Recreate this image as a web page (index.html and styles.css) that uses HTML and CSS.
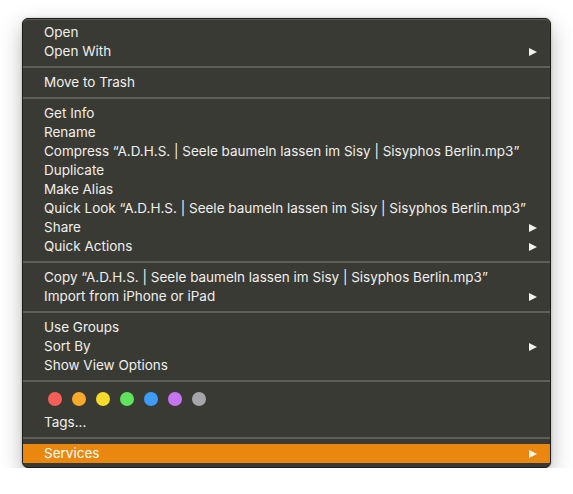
FILE: index.html
```html
<!DOCTYPE html>
<html>
<head>
<meta charset="utf-8">
<link rel="stylesheet" href="styles.css">
</head>
<body>
<div class="menu">
  <div class="item">Open</div>
  <div class="item sub">Open With</div>
  <div class="sep"></div>
  <div class="item">Move to Trash</div>
  <div class="sep"></div>
  <div class="item">Get Info</div>
  <div class="item">Rename</div>
  <div class="item">Compress “A.D.H.S. | Seele baumeln lassen im Sisy | Sisyphos Berlin.mp3”</div>
  <div class="item">Duplicate</div>
  <div class="item">Make Alias</div>
  <div class="item">Quick Look “A.D.H.S. | Seele baumeln lassen im Sisy | Sisyphos Berlin.mp3”</div>
  <div class="item sub">Share</div>
  <div class="item sub">Quick Actions</div>
  <div class="sep"></div>
  <div class="item">Copy “A.D.H.S. | Seele baumeln lassen im Sisy | Sisyphos Berlin.mp3”</div>
  <div class="item sub">Import from iPhone or iPad</div>
  <div class="sep"></div>
  <div class="item">Use Groups</div>
  <div class="item sub">Sort By</div>
  <div class="item">Show View Options</div>
  <div class="sep"></div>
  <div class="tags">
    <span class="dot red"></span>
    <span class="dot orange"></span>
    <span class="dot yellow"></span>
    <span class="dot green"></span>
    <span class="dot blue"></span>
    <span class="dot purple"></span>
    <span class="dot gray"></span>
  </div>
  <div class="item">Tags...</div>
  <div class="sep"></div>
  <div class="item sub active">Services</div>
</div>
</body>
</html>
```

FILE: styles.css
```css
html, body {
  margin: 0;
  padding: 0;
  background: #ffffff;
}
body {
  padding: 18px 0 0 22px;
  font-family: Inter, "Liberation Sans", Arial, sans-serif;
  font-size: 13.5px;
}
.menu {
  width: 527px;
  background: #3a3a34;
  border: 1px solid #1c1c1a;
  border-radius: 6px;
  box-shadow: inset 0 1px 0 rgba(255,255,255,0.18), 0 8px 22px rgba(0,0,0,0.28), 0 0 3px rgba(0,0,0,0.2);
  padding: 4px 0 4px 0;
  color: #efefed;
}
.item {
  height: 19px;
  line-height: 19px;
  padding: 0 13px 0 21px;
  white-space: nowrap;
  display: flex;
  justify-content: space-between;
  align-items: center;
}
.item.sub::after {
  content: "";
  width: 0;
  height: 0;
  border-top: 4.5px solid transparent;
  border-bottom: 4.5px solid transparent;
  border-left: 8px solid #f2f2f0;
}
.item.active {
  background: #ea870e;
  color: #ffffff;
}
.sep {
  height: 2px;
  background: #5e5e58;
  margin: 5px 0;
}
.tags {
  display: flex;
  gap: 10px;
  padding: 5px 0 7px 25px;
}
.dot {
  width: 14px;
  height: 14px;
  border-radius: 50%;
}
.red { background: #f65f58; }
.orange { background: #f8a92b; }
.yellow { background: #f6dc2a; }
.green { background: #5ee35a; }
.blue { background: #3d9cf8; }
.purple { background: #c774f2; }
.gray { background: #a6a5aa; }
```
